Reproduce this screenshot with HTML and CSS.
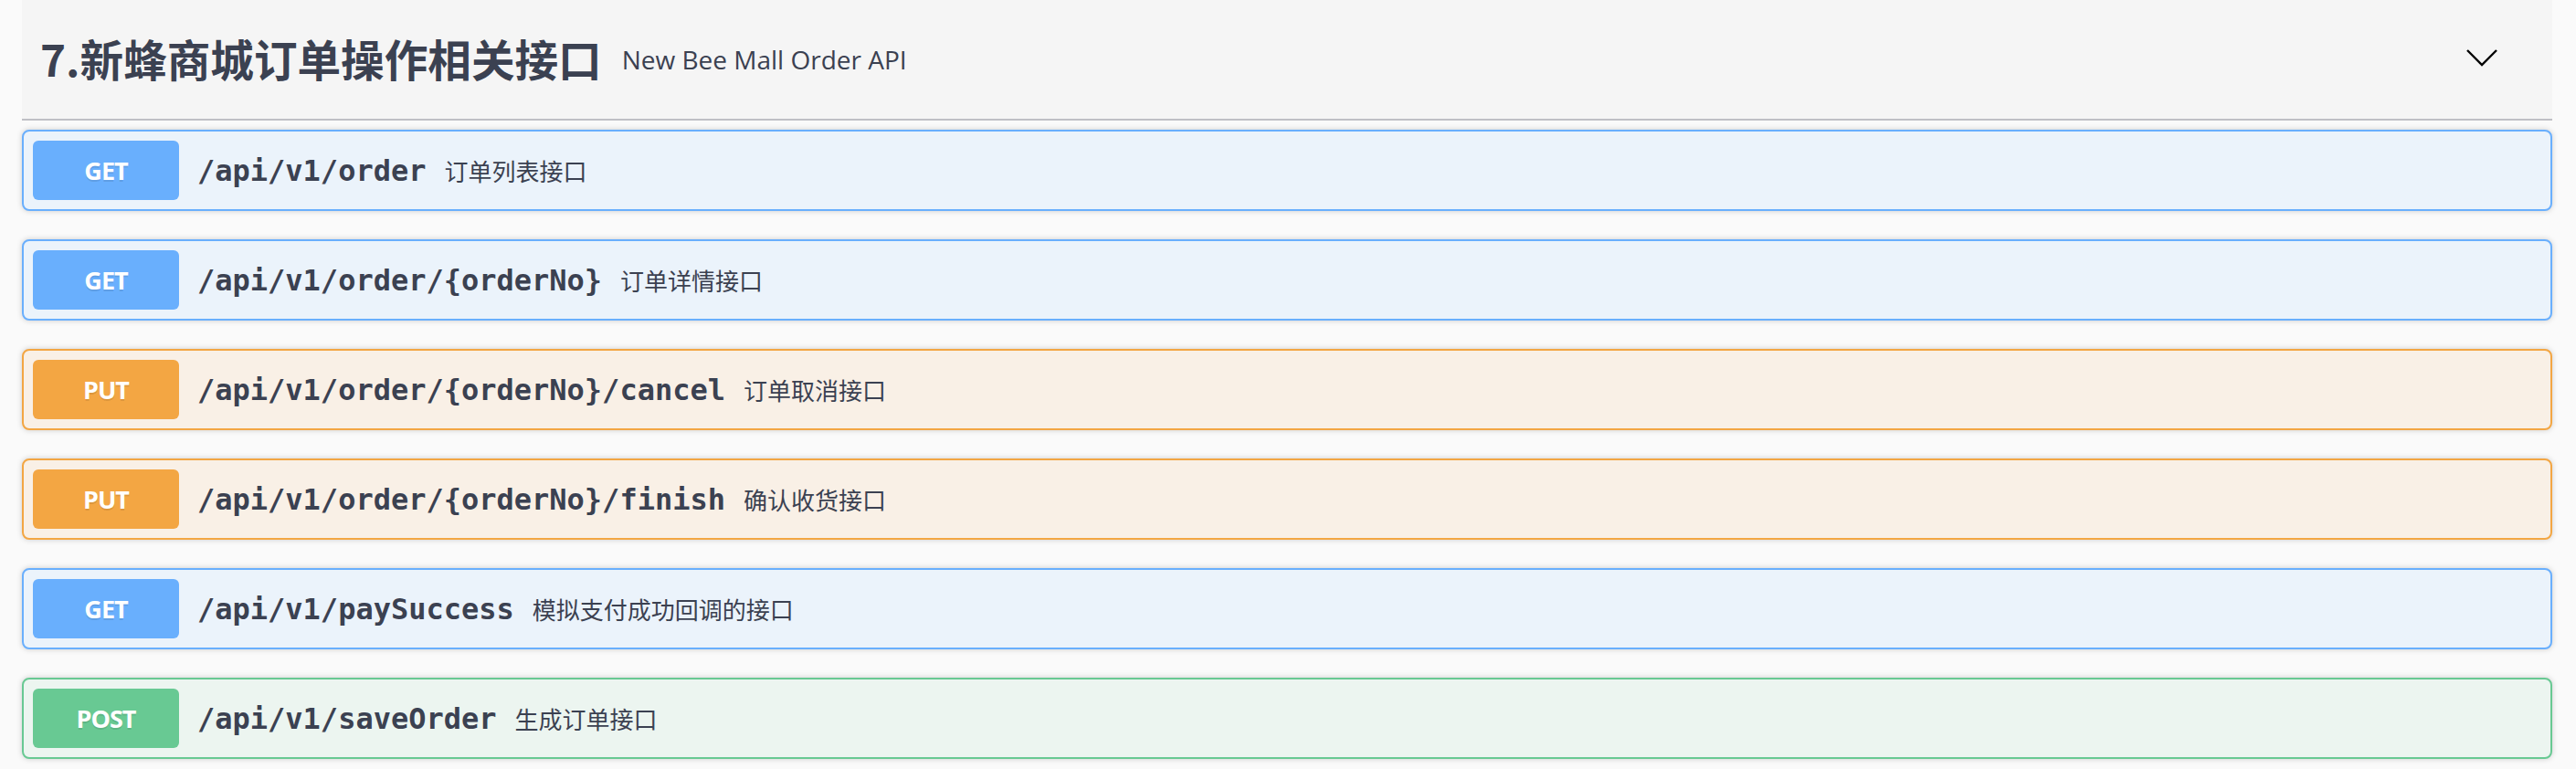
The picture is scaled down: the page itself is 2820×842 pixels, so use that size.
FILE: index.html
```html
<!DOCTYPE html>
<html lang="zh-CN">
<head>
<meta charset="utf-8">
<title>New Bee Mall Order API</title>
<link rel="stylesheet" href="styles.css">
</head>
<body>
<div class="wrapper">
  <div class="tag">
    <span class="tag-title">7.新蜂商城订单操作相关接口</span>
    <span class="tag-desc">New Bee Mall Order API</span>
    <span class="tag-arrow">
      <svg width="40" height="24" viewBox="0 0 40 24"><polyline points="3,4 19,20 35,4" fill="none" stroke="#000" stroke-width="2.4"/></svg>
    </span>
  </div>
  <div class="ops">
    <div class="op op-get"><span class="method">GET</span><span class="path">/api/v1/order</span><span class="desc">订单列表接口</span></div>
    <div class="op op-get"><span class="method">GET</span><span class="path">/api/v1/order/{orderNo}</span><span class="desc">订单详情接口</span></div>
    <div class="op op-put"><span class="method">PUT</span><span class="path">/api/v1/order/{orderNo}/cancel</span><span class="desc">订单取消接口</span></div>
    <div class="op op-put"><span class="method">PUT</span><span class="path">/api/v1/order/{orderNo}/finish</span><span class="desc">确认收货接口</span></div>
    <div class="op op-get"><span class="method">GET</span><span class="path">/api/v1/paySuccess</span><span class="desc">模拟支付成功回调的接口</span></div>
    <div class="op op-post"><span class="method">POST</span><span class="path">/api/v1/saveOrder</span><span class="desc">生成订单接口</span></div>
  </div>
</div>
</body>
</html>
```
FILE: styles.css
```css
html, body {
  margin: 0;
  padding: 0;
  background: #fafafa;
}
.wrapper {
  padding: 0 26px 0 24px;
  color: #3b4151;
}
.tag {
  display: flex;
  align-items: center;
  height: 130px;
  padding: 0 56px 0 20px;
  background: #f5f5f5;
  border-bottom: 2px solid #bfc0c5;
}
.tag-title {
  font-family: "Noto Sans CJK SC", "Noto Sans", sans-serif;
  font-weight: 700;
  font-size: 47.6px;
  color: #3b4151;
  margin-top: -4px;
}
.tag-desc {
  font-family: "Open Sans", "Noto Sans CJK SC", sans-serif;
  font-size: 28px;
  margin-left: 22px;
  color: #3b4151;
}
.tag-arrow {
  margin-left: auto;
  display: flex;
  margin-top: -4px;
}
.ops {
  padding-top: 10px;
}
.op {
  display: flex;
  align-items: center;
  height: 85px;
  padding: 0 10px;
  margin-bottom: 31px;
  border: 2px solid;
  border-radius: 8px;
  box-shadow: 0 0 6px rgba(0, 0, 0, 0.19);
}
.method {
  display: flex;
  align-items: center;
  justify-content: center;
  width: 160px;
  height: 65px;
  border-radius: 6px;
  color: #fff;
  font-family: "Open Sans", sans-serif;
  font-weight: 700;
  font-size: 27px;
  letter-spacing: -1px;
  text-shadow: 0 2px 0 rgba(0, 0, 0, 0.1);
}
.path {
  padding: 0 20px;
  font-family: "DejaVu Sans Mono", "Liberation Mono", monospace;
  font-weight: 700;
  font-size: 32px;
  color: #3b4151;
}
.desc {
  font-family: "Noto Sans CJK SC", sans-serif;
  font-size: 26px;
  color: #3b4151;
}
.op-get { border-color: #69affd; background: #ebf3fb; }
.op-get .method { background: #69affd; }
.op-put { border-color: #f3a643; background: #f9f0e6; }
.op-put .method { background: #f3a643; }
.op-post { border-color: #68c993; background: #ecf5f0; }
.op-post .method { background: #68c993; }
```
